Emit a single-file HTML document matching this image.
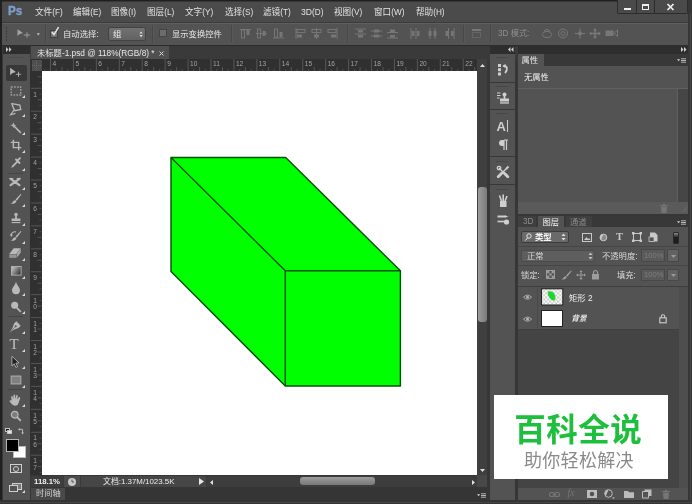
<!DOCTYPE html><html lang="zh"><head><meta charset="utf-8"><title>Photoshop</title><style>
html,body{margin:0;padding:0;background:#282828;}
#w{position:absolute;left:0;top:0;width:692px;height:504px;overflow:hidden;will-change:transform;}
body{width:692px;height:504px;overflow:hidden;position:relative;font-family:"Liberation Sans","Noto Sans CJK SC",sans-serif;font-size:8.25px;color:#e0e0e0;line-height:1;}
.a{position:absolute;}
.t{position:absolute;white-space:nowrap;line-height:10px;height:10px;}
.dim{color:#8c8c8c;}
svg{position:absolute;overflow:visible;}
</style></head><body><div id="w">
<div class="a" style="left:0px;top:0px;width:692px;height:504px;background:#363636;"></div>
<div class="a" style="left:0px;top:0px;width:692px;height:1.2px;background:#202020;"></div>
<div class="a" style="left:0px;top:0px;width:1.6px;height:504px;background:#202020;"></div>
<div class="a" style="left:2px;top:1.5px;width:686px;height:21px;background:#4b4b4b;"></div>
<div class="a" style="left:2px;top:22px;width:686px;height:1px;background:#3b3b3b;"></div>
<div class="a" style="left:2px;top:23px;width:686px;height:22px;background:#535353;border-top:1px solid #5f5f5f;box-sizing:border-box;"></div>
<div class="a" style="left:2px;top:45px;width:686px;height:14.5px;background:#3a3a3a;"></div>
<div class="a" style="left:2px;top:45px;width:686px;height:1px;background:#2c2c2c;"></div>
<div class="t " style="left:7.8px;top:2.8px;font-size:13.3px;font-weight:bold;color:#7fa0cc;line-height:15px;height:15px;transform:scaleX(0.88);transform-origin:0 0;-webkit-text-stroke:0.35px #7fa0cc;">Ps</div>
<div class="t " style="left:35px;top:6.5px;font-size:8.6px;color:#e2e2e2;">文件<span style="font-size:8.2px">(F)</span></div>
<div class="t " style="left:73px;top:6.5px;font-size:8.6px;color:#e2e2e2;">编辑<span style="font-size:8.2px">(E)</span></div>
<div class="t " style="left:111px;top:6.5px;font-size:8.6px;color:#e2e2e2;">图像<span style="font-size:8.2px">(I)</span></div>
<div class="t " style="left:147px;top:6.5px;font-size:8.6px;color:#e2e2e2;">图层<span style="font-size:8.2px">(L)</span></div>
<div class="t " style="left:185px;top:6.5px;font-size:8.6px;color:#e2e2e2;">文字<span style="font-size:8.2px">(Y)</span></div>
<div class="t " style="left:225px;top:6.5px;font-size:8.6px;color:#e2e2e2;">选择<span style="font-size:8.2px">(S)</span></div>
<div class="t " style="left:263px;top:6.5px;font-size:8.6px;color:#e2e2e2;">滤镜<span style="font-size:8.2px">(T)</span></div>
<div class="t " style="left:301px;top:6.5px;font-size:8.6px;color:#e2e2e2;">3D<span style="font-size:8.2px">(D)</span></div>
<div class="t " style="left:334px;top:6.5px;font-size:8.6px;color:#e2e2e2;">视图<span style="font-size:8.2px">(V)</span></div>
<div class="t " style="left:374px;top:6.5px;font-size:8.6px;color:#e2e2e2;">窗口<span style="font-size:8.2px">(W)</span></div>
<div class="t " style="left:416px;top:6.5px;font-size:8.6px;color:#e2e2e2;">帮助<span style="font-size:8.2px">(H)</span></div>
<div class="a" style="left:616.5px;top:0px;width:71.5px;height:13.5px;background:#4a4a4a;border:1px solid #2c2c2c;border-top:none;box-sizing:border-box;border-radius:0 0 2px 2px;"></div>
<div class="a" style="left:636px;top:0px;width:1px;height:13px;background:#2c2c2c;"></div>
<div class="a" style="left:654px;top:0px;width:1px;height:13px;background:#2c2c2c;"></div>
<div class="a" style="left:624px;top:8px;width:7px;height:2px;background:#f0f0f0;"></div>
<div class="a" style="left:642px;top:4.3px;width:7.2px;height:5.7px;background:transparent;border:1.2px solid #f0f0f0;border-top-width:2.4px;box-sizing:border-box;"></div>
<svg style="left:667px;top:4px" width="7" height="6" viewBox="0 0 7 6"><path d="M0.5 0 L6.5 6 M6.5 0 L0.5 6" stroke="#f0f0f0" stroke-width="1.7" fill="none"/></svg>
<div class="a" style="left:5.5px;top:27px;width:1.5px;height:1.5px;background:#3c3c3c;"></div>
<div class="a" style="left:5.5px;top:30px;width:1.5px;height:1.5px;background:#3c3c3c;"></div>
<div class="a" style="left:5.5px;top:33px;width:1.5px;height:1.5px;background:#3c3c3c;"></div>
<div class="a" style="left:5.5px;top:36px;width:1.5px;height:1.5px;background:#3c3c3c;"></div>
<div class="a" style="left:5.5px;top:39px;width:1.5px;height:1.5px;background:#3c3c3c;"></div>
<svg style="left:17px;top:28px" width="24" height="12" viewBox="0 0 24 12"><path d="M0.5 1.2 L0.5 8 L2.3 6.3 L6 5 Z" fill="#a4a4a4"/><path d="M6.7 7 H13.2 M10 4.2 V9.8" stroke="#a0a0a0" stroke-width="0.9"/><path d="M19.7 5.3 L22.9 5.3 L21.3 7.5 Z" fill="#c4c4c4"/></svg>
<div class="a" style="left:44.5px;top:25px;width:1px;height:17px;background:#474747;box-shadow:1px 0 0 #595959;"></div>
<div class="a" style="left:49.5px;top:29.5px;width:8px;height:8px;background:#747474;border:1px solid #404040;box-sizing:border-box;"></div>
<svg style="left:50px;top:26px" width="10" height="11" viewBox="0 0 10 11"><path d="M1.8 6 L4 8.6 L8.6 1.2" stroke="#e8e8e8" stroke-width="1.5" fill="none"/></svg>
<div class="t " style="left:63px;top:28.8px;font-size:8.4px;color:#e6e6e6;">自动选择:</div>
<div class="a" style="left:108px;top:27px;width:37.5px;height:13.5px;background:linear-gradient(180deg,#727272,#626262);border:1px solid #424242;box-sizing:border-box;border-radius:2.5px;"></div>
<div class="t " style="left:113px;top:29px;font-size:8.4px;color:#f0f0f0;">组</div>
<svg style="left:138.5px;top:30.7px" width="4.2" height="6.6" viewBox="0 0 5 8"><path d="M0.5 3 L2.5 0.5 L4.5 3 Z M0.5 5 L2.5 7.5 L4.5 5 Z" fill="#e0e0e0"/></svg>
<div class="a" style="left:152px;top:25px;width:1px;height:17px;background:#474747;box-shadow:1px 0 0 #595959;"></div>
<div class="a" style="left:159px;top:29.3px;width:8px;height:8px;background:#6c6c6c;border:1px solid #444;box-sizing:border-box;"></div>
<div class="t " style="left:172px;top:28.8px;font-size:8.3px;color:#e6e6e6;">显示变换控件</div>
<div class="a" style="left:230.5px;top:25px;width:1px;height:17px;background:#474747;box-shadow:1px 0 0 #595959;"></div>
<svg style="left:239.5px;top:28px" width="11" height="11" viewBox="0 0 11 11"><path d="M0 1.5 H11" stroke="#767676"/><rect x="1.5" y="2" width="3" height="8" fill="none" stroke="#767676"/><rect x="6.5" y="2" width="3" height="5" fill="#767676"/></svg>
<svg style="left:256.3px;top:28px" width="11" height="11" viewBox="0 0 11 11"><path d="M0 5.5 H11" stroke="#767676"/><rect x="1.5" y="1" width="3" height="9" fill="none" stroke="#767676"/><rect x="6.5" y="3" width="3" height="5" fill="#767676"/></svg>
<svg style="left:273px;top:28px" width="11" height="11" viewBox="0 0 11 11"><path d="M0 10 H11" stroke="#767676"/><rect x="1.5" y="1" width="3" height="8" fill="none" stroke="#767676"/><rect x="6.5" y="4" width="3" height="5" fill="#767676"/></svg>
<svg style="left:294.5px;top:28px" width="11" height="11" viewBox="0 0 11 11"><path d="M1 0 V11" stroke="#767676"/><rect x="2" y="1.5" width="8" height="3" fill="none" stroke="#767676"/><rect x="2" y="6.5" width="5" height="3" fill="#767676"/></svg>
<svg style="left:310.6px;top:28px" width="11" height="11" viewBox="0 0 11 11"><path d="M5.5 0 V11" stroke="#767676"/><rect x="1" y="1.5" width="9" height="3" fill="none" stroke="#767676"/><rect x="3" y="6.5" width="5" height="3" fill="#767676"/></svg>
<svg style="left:327.4px;top:28px" width="11" height="11" viewBox="0 0 11 11"><path d="M10 0 V11" stroke="#767676"/><rect x="1" y="1.5" width="8" height="3" fill="none" stroke="#767676"/><rect x="4" y="6.5" width="5" height="3" fill="#767676"/></svg>
<svg style="left:355.4px;top:28px" width="11" height="11" viewBox="0 0 11 11"><path d="M0 1 H11 M0 6 H11" stroke="#767676"/><rect x="3" y="2" width="5" height="2.5" fill="#767676"/><rect x="3" y="7" width="5" height="2.5" fill="#767676"/></svg>
<svg style="left:371.3px;top:28px" width="11" height="11" viewBox="0 0 11 11"><path d="M0 3 H11 M0 8 H11" stroke="#767676"/><rect x="3" y="1.5" width="5" height="3" fill="#767676"/><rect x="3" y="6.5" width="5" height="3" fill="#767676"/></svg>
<svg style="left:387.2px;top:28px" width="11" height="11" viewBox="0 0 11 11"><path d="M0 4.5 H11 M0 10 H11" stroke="#767676"/><rect x="3" y="1.5" width="5" height="2.5" fill="#767676"/><rect x="3" y="7" width="5" height="2.5" fill="#767676"/></svg>
<svg style="left:409.8px;top:28px" width="11" height="11" viewBox="0 0 11 11"><path d="M1 0 V11 M6 0 V11" stroke="#767676"/><rect x="2" y="3" width="2.5" height="5" fill="#767676"/><rect x="7" y="3" width="2.5" height="5" fill="#767676"/></svg>
<svg style="left:426.6px;top:28px" width="11" height="11" viewBox="0 0 11 11"><path d="M3 0 V11 M8 0 V11" stroke="#767676"/><rect x="1.5" y="3" width="3" height="5" fill="#767676"/><rect x="6.5" y="3" width="3" height="5" fill="#767676"/></svg>
<svg style="left:443.5px;top:28px" width="11" height="11" viewBox="0 0 11 11"><path d="M4.5 0 V11 M10 0 V11" stroke="#767676"/><rect x="1.5" y="3" width="2.5" height="5" fill="#767676"/><rect x="7" y="3" width="2.5" height="5" fill="#767676"/></svg>
<svg style="left:471px;top:28px" width="11" height="11" viewBox="0 0 11 11"><rect x="1" y="1" width="9" height="2" fill="#767676"/><rect x="1.5" y="4.5" width="8" height="5" fill="none" stroke="#767676" stroke-dasharray="1 1"/></svg>
<div class="a" style="left:347px;top:25px;width:1px;height:17px;background:#474747;box-shadow:1px 0 0 #595959;"></div>
<div class="a" style="left:463px;top:25px;width:1px;height:17px;background:#474747;box-shadow:1px 0 0 #595959;"></div>
<div class="a" style="left:489.5px;top:25px;width:1px;height:17px;background:#474747;box-shadow:1px 0 0 #595959;"></div>
<div class="t " style="left:498px;top:28.8px;font-size:8.2px;color:#8e8e8e;">3D 模式:</div>
<svg style="left:541px;top:28px" width="12" height="11" viewBox="0 0 12 11"><ellipse cx="6" cy="6.5" rx="4.5" ry="3" fill="none" stroke="#787878"/><path d="M3 3 A4 4 0 0 1 9 3" fill="none" stroke="#787878"/></svg>
<svg style="left:557px;top:28px" width="12" height="11" viewBox="0 0 12 11"><circle cx="6" cy="5.5" r="4.5" fill="none" stroke="#787878"/><circle cx="6" cy="5.5" r="2" fill="none" stroke="#787878"/></svg>
<svg style="left:574px;top:28px" width="12" height="11" viewBox="0 0 12 11"><path d="M6 0.5 V10.5 M1 5.5 H11" stroke="#787878"/><circle cx="6" cy="5.5" r="2" fill="#787878"/></svg>
<svg style="left:589px;top:28px" width="12" height="11" viewBox="0 0 12 11"><path d="M6 1 V10 M1 5.5 H11" stroke="#787878" stroke-width="1.5"/><path d="M6 0 L8 2.5 H4 Z M6 11 L8 8.5 H4 Z M0 5.5 L2.5 3.5 V7.5 Z M12 5.5 L9.5 3.5 V7.5 Z" fill="#787878"/></svg>
<svg style="left:605px;top:29px" width="13" height="9" viewBox="0 0 13 9"><rect x="0.5" y="1.5" width="8" height="5.5" fill="#787878"/><path d="M9 4.2 L12.5 1 V7.5 Z" fill="none" stroke="#787878"/></svg>
<div class="a" style="left:31px;top:46px;width:138px;height:13px;background:#505050;border-radius:1px 1px 0 0;"></div>
<div class="t " style="left:37px;top:48px;font-size:8.3px;color:#e8e8e8;">未标题-1.psd @ 118%(RGB/8) *</div>
<svg style="left:158.5px;top:50.5px" width="5" height="5" viewBox="0 0 5 5"><path d="M0.5 0.5 L4.5 4.5 M4.5 0.5 L0.5 4.5" stroke="#d8d8d8" stroke-width="1"/></svg>
<div class="a" style="left:3px;top:45px;width:26.5px;height:8.5px;background:#2e2e2e;"></div>
<svg style="left:6px;top:47px" width="6" height="5" viewBox="0 0 6 5"><path d="M0 0 L2.5 2.5 L0 5 Z M3 0 L5.5 2.5 L3 5 Z" fill="#d0d0d0"/></svg>
<div class="a" style="left:3px;top:53.5px;width:26.5px;height:446px;background:#535353;"></div>
<div class="a" style="left:9px;top:57px;width:14px;height:1.2px;background:#494949;"></div>
<div class="a" style="left:6px;top:64.5px;width:20.5px;height:16px;background:#383838;border-radius:2px;"></div>
<svg style="left:8.2px;top:66px;transform:scale(0.88);opacity:0.92" width="14" height="14" viewBox="0 0 14 14"><path d="M1.5 1 L1.5 9.5 L3.8 7.3 L8 6 Z" fill="#c2c2c2"/><path d="M8 8.5 H14 M11 5.5 V11.5" stroke="#c2c2c2" stroke-width="1"/></svg>
<svg style="left:8.7px;top:83.5px;transform:scale(0.88);opacity:0.92" width="14" height="14" viewBox="0 0 14 14"><rect x="1.5" y="2.5" width="11" height="9" fill="none" stroke="#c2c2c2" stroke-width="1.2" stroke-dasharray="2 1.3"/></svg>
<svg style="left:22px;top:95px" width="3" height="3" viewBox="0 0 3 3"><path d="M3 0 V3 H0 Z" fill="#d8d8d8"/></svg>
<svg style="left:8px;top:102px;transform:scale(0.88);opacity:0.92" width="14" height="14" viewBox="0 0 14 14"><path d="M3.5 1 L12.5 2.5 L13.5 7.5 L7 9 L5 5.5 Z" fill="none" stroke="#c2c2c2" stroke-width="1.5"/><path d="M6 8 L2 13.5 L7.5 12" fill="none" stroke="#c2c2c2" stroke-width="1.3"/></svg>
<svg style="left:22px;top:113.5px" width="3" height="3" viewBox="0 0 3 3"><path d="M3 0 V3 H0 Z" fill="#d8d8d8"/></svg>
<svg style="left:8.7px;top:120.5px;transform:scale(0.88);opacity:0.92" width="14" height="14" viewBox="0 0 14 14"><path d="M5 5 L12.5 12.5" stroke="#c2c2c2" stroke-width="1.8"/><path d="M4 0.5 L4.8 3 L7.5 3.8 L4.8 4.8 L4 7.5 L3.2 4.8 L0.5 3.8 L3.2 3 Z" fill="#c2c2c2"/></svg>
<svg style="left:22px;top:132px" width="3" height="3" viewBox="0 0 3 3"><path d="M3 0 V3 H0 Z" fill="#d8d8d8"/></svg>
<svg style="left:8.7px;top:138px;transform:scale(0.88);opacity:0.92" width="14" height="14" viewBox="0 0 14 14"><path d="M4 1 V10 H13 M1 4 H10 V13" fill="none" stroke="#c2c2c2" stroke-width="1.6"/></svg>
<svg style="left:22px;top:149.5px" width="3" height="3" viewBox="0 0 3 3"><path d="M3 0 V3 H0 Z" fill="#d8d8d8"/></svg>
<svg style="left:8.7px;top:156px;transform:scale(0.88);opacity:0.92" width="14" height="14" viewBox="0 0 14 14"><path d="M1.5 12.5 L2.5 10 L8 4.5 L9.5 6 L4 11.5 Z" fill="#c2c2c2"/><path d="M7 3 L11 7 M8.5 4.5 L11.5 1.5" stroke="#c2c2c2" stroke-width="2.2" stroke-linecap="round"/></svg>
<svg style="left:22px;top:167.5px" width="3" height="3" viewBox="0 0 3 3"><path d="M3 0 V3 H0 Z" fill="#d8d8d8"/></svg>
<div class="a" style="left:8px;top:172.5px;width:15px;height:1px;background:#454545;"></div>
<svg style="left:8.2px;top:175px;transform:scale(0.88);opacity:0.92" width="14" height="14" viewBox="0 0 14 14"><path d="M2 3.5 L12 10.5 M2 10.5 L12 3.5" stroke="#c2c2c2" stroke-width="2.6" stroke-linecap="round"/><path d="M0.5 3 H5 M9 3 H13.5" stroke="#c2c2c2" stroke-width="1.3"/></svg>
<svg style="left:22px;top:186.5px" width="3" height="3" viewBox="0 0 3 3"><path d="M3 0 V3 H0 Z" fill="#d8d8d8"/></svg>
<svg style="left:8.7px;top:192.3px;transform:scale(0.88);opacity:0.92" width="14" height="14" viewBox="0 0 14 14"><path d="M12.5 1 L6.5 7.5 L8 9 L13 2 Z" fill="#c2c2c2"/><path d="M6 8 L7.5 9.5 C6.5 12.5 3.5 12.5 1 12.5 C3 11.5 3.5 9 6 8 Z" fill="#c2c2c2"/></svg>
<svg style="left:22px;top:203.8px" width="3" height="3" viewBox="0 0 3 3"><path d="M3 0 V3 H0 Z" fill="#d8d8d8"/></svg>
<svg style="left:8.7px;top:211px;transform:scale(0.88);opacity:0.92" width="14" height="14" viewBox="0 0 14 14"><circle cx="7" cy="3" r="2" fill="#c2c2c2"/><path d="M6 4 H8 V7.5 H12 V10.5 H2 V7.5 H6 Z" fill="#c2c2c2"/><rect x="2" y="11.5" width="10" height="1.3" fill="#c2c2c2"/></svg>
<svg style="left:22px;top:222.5px" width="3" height="3" viewBox="0 0 3 3"><path d="M3 0 V3 H0 Z" fill="#d8d8d8"/></svg>
<svg style="left:8.7px;top:229px;transform:scale(0.88);opacity:0.92" width="14" height="14" viewBox="0 0 14 14"><path d="M12.5 1 L6.5 7.5 L8 9 L13 2 Z" fill="#c2c2c2"/><path d="M6 8 L7.5 9.5 C6.5 12.5 3.5 12.5 1 12.5 C3 11.5 3.5 9 6 8 Z" fill="#c2c2c2"/><path d="M1.5 6 A4 4 0 0 1 7 2.5" fill="none" stroke="#c2c2c2" stroke-width="1.2"/><path d="M0 5 L3.5 5.5 L1.5 8 Z" fill="#c2c2c2"/></svg>
<svg style="left:22px;top:240.5px" width="3" height="3" viewBox="0 0 3 3"><path d="M3 0 V3 H0 Z" fill="#d8d8d8"/></svg>
<svg style="left:8.4px;top:246px;transform:scale(0.88);opacity:0.92" width="14" height="14" viewBox="0 0 14 14"><path d="M5.5 1.5 H13.5 L8.5 8 H0.5 Z" fill="#c2c2c2"/><path d="M0.5 8.6 H8.5 V12.5 H0.5 Z" fill="#9a9a9a"/><path d="M9 8 L13.5 2 V6.5 L9 12.5 Z" fill="#b0b0b0"/></svg>
<svg style="left:22px;top:257.5px" width="3" height="3" viewBox="0 0 3 3"><path d="M3 0 V3 H0 Z" fill="#d8d8d8"/></svg>
<svg style="left:9.5px;top:264px" width="14" height="14" viewBox="0 0 14 14"><defs><linearGradient id="gr" x1="0" x2="1" y1="0" y2="0.6"><stop offset="0" stop-color="#d0d0d0"/><stop offset="1" stop-color="#3c3c3c"/></linearGradient></defs><rect x="1.5" y="2.5" width="9.6" height="8.6" fill="url(#gr)" stroke="#b4b4b4" stroke-width="0.9"/></svg>
<svg style="left:22px;top:275.5px" width="3" height="3" viewBox="0 0 3 3"><path d="M3 0 V3 H0 Z" fill="#d8d8d8"/></svg>
<svg style="left:8.7px;top:281px;transform:scale(0.88);opacity:0.92" width="14" height="14" viewBox="0 0 14 14"><path d="M7 0 C8 4 11.5 6.5 11.5 9.5 A4.5 4.5 0 0 1 2.5 9.5 C2.5 6.5 6 4 7 0 Z" fill="#c2c2c2"/></svg>
<svg style="left:22px;top:292.5px" width="3" height="3" viewBox="0 0 3 3"><path d="M3 0 V3 H0 Z" fill="#d8d8d8"/></svg>
<svg style="left:8.7px;top:299.5px;transform:scale(0.88);opacity:0.92" width="14" height="14" viewBox="0 0 14 14"><circle cx="5.5" cy="5" r="4" fill="#c2c2c2"/><path d="M8 8 L12.5 12.5" stroke="#c2c2c2" stroke-width="2"/></svg>
<svg style="left:22px;top:311px" width="3" height="3" viewBox="0 0 3 3"><path d="M3 0 V3 H0 Z" fill="#d8d8d8"/></svg>
<div class="a" style="left:8px;top:315.5px;width:15px;height:1px;background:#454545;"></div>
<svg style="left:8.4px;top:319.5px;transform:scale(0.88);opacity:0.92" width="14" height="14" viewBox="0 0 14 14"><path d="M8.5 0.5 L13.5 5.5 L11 8 L5.5 10 L0.5 13.5 L4 8.5 L6 3 Z" fill="#c2c2c2"/><circle cx="7.8" cy="6.2" r="1.1" fill="#535353"/><path d="M0.5 13.5 L7 7" stroke="#535353" stroke-width="0.7"/></svg>
<svg style="left:22px;top:331px" width="3" height="3" viewBox="0 0 3 3"><path d="M3 0 V3 H0 Z" fill="#d8d8d8"/></svg>
<div class="t" style="left:9.5px;top:337px;font-family:'Liberation Serif',serif;font-size:15px;line-height:15px;height:15px;color:#c2c2c2;">T</div>
<svg style="left:22px;top:349px" width="3" height="3" viewBox="0 0 3 3"><path d="M3 0 V3 H0 Z" fill="#d8d8d8"/></svg>
<svg style="left:8.3px;top:354.5px;transform:scale(0.88);opacity:0.92" width="14" height="14" viewBox="0 0 14 14"><path d="M3.5 0.5 L3.5 11.5 L6 9 L8 13.2 L10 12.3 L8 8.3 L11.5 8 Z" fill="#1c1c1c" stroke="#c2c2c2" stroke-width="1"/></svg>
<svg style="left:22px;top:366px" width="3" height="3" viewBox="0 0 3 3"><path d="M3 0 V3 H0 Z" fill="#d8d8d8"/></svg>
<svg style="left:8.7px;top:373px;transform:scale(0.88);opacity:0.92" width="14" height="14" viewBox="0 0 14 14"><rect x="1.5" y="2.5" width="11" height="9" fill="#858585" stroke="#b8b8b8" stroke-width="1.1"/></svg>
<svg style="left:22px;top:384.5px" width="3" height="3" viewBox="0 0 3 3"><path d="M3 0 V3 H0 Z" fill="#d8d8d8"/></svg>
<div class="a" style="left:8px;top:389px;width:15px;height:1px;background:#454545;"></div>
<svg style="left:8.2px;top:392.5px;transform:scale(0.88);opacity:0.92" width="14" height="14" viewBox="0 0 14 14"><path d="M3.2 7.5 L2.6 3 Q3.5 2 4.3 3 L5 6 L5.3 1.3 Q6.3 0.3 7.1 1.3 L7.3 6 L8.4 1.6 Q9.5 0.9 10.1 2 L9.6 6.5 L11.6 3.6 Q12.8 3.4 13 4.6 L11.3 9.5 Q10.5 13.5 6.8 13.5 Q4 13.5 0.6 8.2 Q1.6 6.6 3.2 7.5 Z" fill="#c2c2c2"/></svg>
<svg style="left:22px;top:404px" width="3" height="3" viewBox="0 0 3 3"><path d="M3 0 V3 H0 Z" fill="#d8d8d8"/></svg>
<svg style="left:8.7px;top:409.3px;transform:scale(0.88);opacity:0.92" width="14" height="14" viewBox="0 0 14 14"><circle cx="5.5" cy="5.5" r="3.8" fill="#808080" stroke="#c2c2c2" stroke-width="1.4"/><path d="M8.2 8.2 L12.5 12.5" stroke="#c2c2c2" stroke-width="2"/></svg>
<div class="a" style="left:5.3px;top:427.7px;width:4.6px;height:4.6px;background:#111;border:0.8px solid #c4c4c4;box-sizing:border-box;"></div>
<div class="a" style="left:7.4px;top:429.6px;width:4.6px;height:4.6px;background:#e4e4e4;border:0.8px solid #c4c4c4;box-sizing:border-box;"></div>
<svg style="left:18px;top:427.7px" width="6.4" height="6.4" viewBox="0 0 7 7"><path d="M1.5 1.5 H5 V5.5" fill="none" stroke="#c2c2c2" stroke-width="1"/><path d="M0 1.5 L2 0 V3 Z M5 7 L3.5 5 H6.5 Z" fill="#c2c2c2"/></svg>
<div class="a" style="left:13px;top:445.5px;width:12.5px;height:12px;background:#ffffff;border:0.5px solid #bbb;box-sizing:border-box;"></div>
<div class="a" style="left:6px;top:439px;width:12.5px;height:12.5px;background:#000000;border:1px solid #b5b5b5;box-sizing:border-box;"></div>
<div class="a" style="left:9.5px;top:464px;width:12px;height:9px;background:transparent;border:1px solid #cfcfcf;box-sizing:border-box;"></div>
<div class="a" style="left:12.5px;top:465.5px;width:6px;height:6px;background:transparent;border:1px solid #cfcfcf;box-sizing:border-box;border-radius:50%;"></div>
<div class="a" style="left:12px;top:482.5px;width:9.5px;height:7px;background:#777;border:1px solid #cfcfcf;box-sizing:border-box;"></div>
<div class="a" style="left:9px;top:485px;width:9px;height:6.5px;background:#535353;border:1px solid #cfcfcf;box-sizing:border-box;"></div>
<svg style="left:22px;top:490px" width="3" height="3" viewBox="0 0 3 3"><path d="M3 0 V3 H0 Z" fill="#d8d8d8"/></svg>
<div class="a" style="left:31px;top:59px;width:456px;height:428.5px;background:#3f3f3f;"></div>
<div class="a" style="left:31px;top:59px;width:446px;height:12px;background:#303030;"></div>
<div class="a" style="left:29.5px;top:71px;width:12px;height:404px;background:#303030;"></div>
<div class="a" style="left:31.5px;top:60px;width:10px;height:11px;background:#4f4f4f;"></div>
<svg style="left:31px;top:60px" width="11" height="11" viewBox="0 0 11 11"><path d="M5.5 1 V10 M1 5.5 H10" stroke="#6a6a6a" stroke-width="1" stroke-dasharray="1 1"/></svg>
<svg style="left:0;top:0" width="692" height="504" viewBox="0 0 692 504"><path d="M44.77 69 V71" stroke="#565656" stroke-width="0.8"/><path d="M50.50 59 V71" stroke="#565656" stroke-width="1"/><path d="M56.23 69 V71" stroke="#565656" stroke-width="0.8"/><path d="M61.97 67 V71" stroke="#565656" stroke-width="1"/><path d="M67.70 69 V71" stroke="#565656" stroke-width="0.8"/><path d="M73.43 59 V71" stroke="#565656" stroke-width="1"/><path d="M79.16 69 V71" stroke="#565656" stroke-width="0.8"/><path d="M84.89 67 V71" stroke="#565656" stroke-width="1"/><path d="M90.63 69 V71" stroke="#565656" stroke-width="0.8"/><path d="M96.36 59 V71" stroke="#565656" stroke-width="1"/><path d="M102.09 69 V71" stroke="#565656" stroke-width="0.8"/><path d="M107.82 67 V71" stroke="#565656" stroke-width="1"/><path d="M113.56 69 V71" stroke="#565656" stroke-width="0.8"/><path d="M119.29 59 V71" stroke="#565656" stroke-width="1"/><path d="M125.02 69 V71" stroke="#565656" stroke-width="0.8"/><path d="M130.75 67 V71" stroke="#565656" stroke-width="1"/><path d="M136.49 69 V71" stroke="#565656" stroke-width="0.8"/><path d="M142.22 59 V71" stroke="#565656" stroke-width="1"/><path d="M147.95 69 V71" stroke="#565656" stroke-width="0.8"/><path d="M153.69 67 V71" stroke="#565656" stroke-width="1"/><path d="M159.42 69 V71" stroke="#565656" stroke-width="0.8"/><path d="M165.15 59 V71" stroke="#565656" stroke-width="1"/><path d="M170.88 69 V71" stroke="#565656" stroke-width="0.8"/><path d="M176.62 67 V71" stroke="#565656" stroke-width="1"/><path d="M182.35 69 V71" stroke="#565656" stroke-width="0.8"/><path d="M188.08 59 V71" stroke="#565656" stroke-width="1"/><path d="M193.81 69 V71" stroke="#565656" stroke-width="0.8"/><path d="M199.54 67 V71" stroke="#565656" stroke-width="1"/><path d="M205.28 69 V71" stroke="#565656" stroke-width="0.8"/><path d="M211.01 59 V71" stroke="#565656" stroke-width="1"/><path d="M216.74 69 V71" stroke="#565656" stroke-width="0.8"/><path d="M222.47 67 V71" stroke="#565656" stroke-width="1"/><path d="M228.21 69 V71" stroke="#565656" stroke-width="0.8"/><path d="M233.94 59 V71" stroke="#565656" stroke-width="1"/><path d="M239.67 69 V71" stroke="#565656" stroke-width="0.8"/><path d="M245.41 67 V71" stroke="#565656" stroke-width="1"/><path d="M251.14 69 V71" stroke="#565656" stroke-width="0.8"/><path d="M256.87 59 V71" stroke="#565656" stroke-width="1"/><path d="M262.60 69 V71" stroke="#565656" stroke-width="0.8"/><path d="M268.34 67 V71" stroke="#565656" stroke-width="1"/><path d="M274.07 69 V71" stroke="#565656" stroke-width="0.8"/><path d="M279.80 59 V71" stroke="#565656" stroke-width="1"/><path d="M285.53 69 V71" stroke="#565656" stroke-width="0.8"/><path d="M291.26 67 V71" stroke="#565656" stroke-width="1"/><path d="M297.00 69 V71" stroke="#565656" stroke-width="0.8"/><path d="M302.73 59 V71" stroke="#565656" stroke-width="1"/><path d="M308.46 69 V71" stroke="#565656" stroke-width="0.8"/><path d="M314.20 67 V71" stroke="#565656" stroke-width="1"/><path d="M319.93 69 V71" stroke="#565656" stroke-width="0.8"/><path d="M325.66 59 V71" stroke="#565656" stroke-width="1"/><path d="M331.39 69 V71" stroke="#565656" stroke-width="0.8"/><path d="M337.12 67 V71" stroke="#565656" stroke-width="1"/><path d="M342.86 69 V71" stroke="#565656" stroke-width="0.8"/><path d="M348.59 59 V71" stroke="#565656" stroke-width="1"/><path d="M354.32 69 V71" stroke="#565656" stroke-width="0.8"/><path d="M360.05 67 V71" stroke="#565656" stroke-width="1"/><path d="M365.79 69 V71" stroke="#565656" stroke-width="0.8"/><path d="M371.52 59 V71" stroke="#565656" stroke-width="1"/><path d="M377.25 69 V71" stroke="#565656" stroke-width="0.8"/><path d="M382.99 67 V71" stroke="#565656" stroke-width="1"/><path d="M388.72 69 V71" stroke="#565656" stroke-width="0.8"/><path d="M394.45 59 V71" stroke="#565656" stroke-width="1"/><path d="M400.18 69 V71" stroke="#565656" stroke-width="0.8"/><path d="M405.91 67 V71" stroke="#565656" stroke-width="1"/><path d="M411.65 69 V71" stroke="#565656" stroke-width="0.8"/><path d="M417.38 59 V71" stroke="#565656" stroke-width="1"/><path d="M423.11 69 V71" stroke="#565656" stroke-width="0.8"/><path d="M428.85 67 V71" stroke="#565656" stroke-width="1"/><path d="M434.58 69 V71" stroke="#565656" stroke-width="0.8"/><path d="M440.31 59 V71" stroke="#565656" stroke-width="1"/><path d="M446.04 69 V71" stroke="#565656" stroke-width="0.8"/><path d="M451.77 67 V71" stroke="#565656" stroke-width="1"/><path d="M457.51 69 V71" stroke="#565656" stroke-width="0.8"/><path d="M463.24 59 V71" stroke="#565656" stroke-width="1"/><path d="M468.97 69 V71" stroke="#565656" stroke-width="0.8"/><path d="M474.70 67 V71" stroke="#565656" stroke-width="1"/><path d="M37.5 76.84 H41.5" stroke="#565656" stroke-width="1"/><path d="M39.5 82.57 H41.5" stroke="#565656" stroke-width="0.8"/><path d="M31 88.30 H41.5" stroke="#565656" stroke-width="1"/><path d="M39.5 94.03 H41.5" stroke="#565656" stroke-width="0.8"/><path d="M37.5 99.77 H41.5" stroke="#565656" stroke-width="1"/><path d="M39.5 105.50 H41.5" stroke="#565656" stroke-width="0.8"/><path d="M31 111.23 H41.5" stroke="#565656" stroke-width="1"/><path d="M39.5 116.96 H41.5" stroke="#565656" stroke-width="0.8"/><path d="M37.5 122.70 H41.5" stroke="#565656" stroke-width="1"/><path d="M39.5 128.43 H41.5" stroke="#565656" stroke-width="0.8"/><path d="M31 134.16 H41.5" stroke="#565656" stroke-width="1"/><path d="M39.5 139.89 H41.5" stroke="#565656" stroke-width="0.8"/><path d="M37.5 145.62 H41.5" stroke="#565656" stroke-width="1"/><path d="M39.5 151.36 H41.5" stroke="#565656" stroke-width="0.8"/><path d="M31 157.09 H41.5" stroke="#565656" stroke-width="1"/><path d="M39.5 162.82 H41.5" stroke="#565656" stroke-width="0.8"/><path d="M37.5 168.56 H41.5" stroke="#565656" stroke-width="1"/><path d="M39.5 174.29 H41.5" stroke="#565656" stroke-width="0.8"/><path d="M31 180.02 H41.5" stroke="#565656" stroke-width="1"/><path d="M39.5 185.75 H41.5" stroke="#565656" stroke-width="0.8"/><path d="M37.5 191.49 H41.5" stroke="#565656" stroke-width="1"/><path d="M39.5 197.22 H41.5" stroke="#565656" stroke-width="0.8"/><path d="M31 202.95 H41.5" stroke="#565656" stroke-width="1"/><path d="M39.5 208.68 H41.5" stroke="#565656" stroke-width="0.8"/><path d="M37.5 214.41 H41.5" stroke="#565656" stroke-width="1"/><path d="M39.5 220.15 H41.5" stroke="#565656" stroke-width="0.8"/><path d="M31 225.88 H41.5" stroke="#565656" stroke-width="1"/><path d="M39.5 231.61 H41.5" stroke="#565656" stroke-width="0.8"/><path d="M37.5 237.34 H41.5" stroke="#565656" stroke-width="1"/><path d="M39.5 243.08 H41.5" stroke="#565656" stroke-width="0.8"/><path d="M31 248.81 H41.5" stroke="#565656" stroke-width="1"/><path d="M39.5 254.54 H41.5" stroke="#565656" stroke-width="0.8"/><path d="M37.5 260.27 H41.5" stroke="#565656" stroke-width="1"/><path d="M39.5 266.01 H41.5" stroke="#565656" stroke-width="0.8"/><path d="M31 271.74 H41.5" stroke="#565656" stroke-width="1"/><path d="M39.5 277.47 H41.5" stroke="#565656" stroke-width="0.8"/><path d="M37.5 283.21 H41.5" stroke="#565656" stroke-width="1"/><path d="M39.5 288.94 H41.5" stroke="#565656" stroke-width="0.8"/><path d="M31 294.67 H41.5" stroke="#565656" stroke-width="1"/><path d="M39.5 300.40 H41.5" stroke="#565656" stroke-width="0.8"/><path d="M37.5 306.13 H41.5" stroke="#565656" stroke-width="1"/><path d="M39.5 311.87 H41.5" stroke="#565656" stroke-width="0.8"/><path d="M31 317.60 H41.5" stroke="#565656" stroke-width="1"/><path d="M39.5 323.33 H41.5" stroke="#565656" stroke-width="0.8"/><path d="M37.5 329.06 H41.5" stroke="#565656" stroke-width="1"/><path d="M39.5 334.80 H41.5" stroke="#565656" stroke-width="0.8"/><path d="M31 340.53 H41.5" stroke="#565656" stroke-width="1"/><path d="M39.5 346.26 H41.5" stroke="#565656" stroke-width="0.8"/><path d="M37.5 352.00 H41.5" stroke="#565656" stroke-width="1"/><path d="M39.5 357.73 H41.5" stroke="#565656" stroke-width="0.8"/><path d="M31 363.46 H41.5" stroke="#565656" stroke-width="1"/><path d="M39.5 369.19 H41.5" stroke="#565656" stroke-width="0.8"/><path d="M37.5 374.93 H41.5" stroke="#565656" stroke-width="1"/><path d="M39.5 380.66 H41.5" stroke="#565656" stroke-width="0.8"/><path d="M31 386.39 H41.5" stroke="#565656" stroke-width="1"/><path d="M39.5 392.12 H41.5" stroke="#565656" stroke-width="0.8"/><path d="M37.5 397.86 H41.5" stroke="#565656" stroke-width="1"/><path d="M39.5 403.59 H41.5" stroke="#565656" stroke-width="0.8"/><path d="M31 409.32 H41.5" stroke="#565656" stroke-width="1"/><path d="M39.5 415.05 H41.5" stroke="#565656" stroke-width="0.8"/><path d="M37.5 420.79 H41.5" stroke="#565656" stroke-width="1"/><path d="M39.5 426.52 H41.5" stroke="#565656" stroke-width="0.8"/><path d="M31 432.25 H41.5" stroke="#565656" stroke-width="1"/><path d="M39.5 437.98 H41.5" stroke="#565656" stroke-width="0.8"/><path d="M37.5 443.71 H41.5" stroke="#565656" stroke-width="1"/><path d="M39.5 449.45 H41.5" stroke="#565656" stroke-width="0.8"/><path d="M31 455.18 H41.5" stroke="#565656" stroke-width="1"/><path d="M39.5 460.91 H41.5" stroke="#565656" stroke-width="0.8"/><path d="M37.5 466.64 H41.5" stroke="#565656" stroke-width="1"/><path d="M39.5 472.38 H41.5" stroke="#565656" stroke-width="0.8"/></svg>
<div class="t " style="left:52.5px;top:59px;font-size:6.6px;color:#a2a2a2;line-height:9px;height:9px;">4</div>
<div class="t " style="left:75.43px;top:59px;font-size:6.6px;color:#a2a2a2;line-height:9px;height:9px;">5</div>
<div class="t " style="left:98.36px;top:59px;font-size:6.6px;color:#a2a2a2;line-height:9px;height:9px;">6</div>
<div class="t " style="left:121.29px;top:59px;font-size:6.6px;color:#a2a2a2;line-height:9px;height:9px;">7</div>
<div class="t " style="left:144.22px;top:59px;font-size:6.6px;color:#a2a2a2;line-height:9px;height:9px;">8</div>
<div class="t " style="left:167.15px;top:59px;font-size:6.6px;color:#a2a2a2;line-height:9px;height:9px;">9</div>
<div class="t " style="left:190.08px;top:59px;font-size:6.6px;color:#a2a2a2;line-height:9px;height:9px;">10</div>
<div class="t " style="left:213.01px;top:59px;font-size:6.6px;color:#a2a2a2;line-height:9px;height:9px;">11</div>
<div class="t " style="left:235.94px;top:59px;font-size:6.6px;color:#a2a2a2;line-height:9px;height:9px;">12</div>
<div class="t " style="left:258.87px;top:59px;font-size:6.6px;color:#a2a2a2;line-height:9px;height:9px;">13</div>
<div class="t " style="left:281.8px;top:59px;font-size:6.6px;color:#a2a2a2;line-height:9px;height:9px;">14</div>
<div class="t " style="left:304.73px;top:59px;font-size:6.6px;color:#a2a2a2;line-height:9px;height:9px;">15</div>
<div class="t " style="left:327.66px;top:59px;font-size:6.6px;color:#a2a2a2;line-height:9px;height:9px;">16</div>
<div class="t " style="left:350.59px;top:59px;font-size:6.6px;color:#a2a2a2;line-height:9px;height:9px;">17</div>
<div class="t " style="left:373.52px;top:59px;font-size:6.6px;color:#a2a2a2;line-height:9px;height:9px;">18</div>
<div class="t " style="left:396.45px;top:59px;font-size:6.6px;color:#a2a2a2;line-height:9px;height:9px;">19</div>
<div class="t " style="left:419.38px;top:59px;font-size:6.6px;color:#a2a2a2;line-height:9px;height:9px;">20</div>
<div class="t " style="left:442.31px;top:59px;font-size:6.6px;color:#a2a2a2;line-height:9px;height:9px;">21</div>
<div class="t " style="left:465.24px;top:59px;font-size:6.6px;color:#a2a2a2;line-height:9px;height:9px;">22</div>
<div class="t " style="left:32px;top:90.5px;font-size:6.6px;color:#a2a2a2;line-height:8px;height:8px;width:6px;text-align:center;">1</div>
<div class="t " style="left:32px;top:113.43px;font-size:6.6px;color:#a2a2a2;line-height:8px;height:8px;width:6px;text-align:center;">2</div>
<div class="t " style="left:32px;top:136.36px;font-size:6.6px;color:#a2a2a2;line-height:8px;height:8px;width:6px;text-align:center;">3</div>
<div class="t " style="left:32px;top:159.29px;font-size:6.6px;color:#a2a2a2;line-height:8px;height:8px;width:6px;text-align:center;">4</div>
<div class="t " style="left:32px;top:182.22px;font-size:6.6px;color:#a2a2a2;line-height:8px;height:8px;width:6px;text-align:center;">5</div>
<div class="t " style="left:32px;top:205.15px;font-size:6.6px;color:#a2a2a2;line-height:8px;height:8px;width:6px;text-align:center;">6</div>
<div class="t " style="left:32px;top:228.08px;font-size:6.6px;color:#a2a2a2;line-height:8px;height:8px;width:6px;text-align:center;">7</div>
<div class="t " style="left:32px;top:251.01px;font-size:6.6px;color:#a2a2a2;line-height:8px;height:8px;width:6px;text-align:center;">8</div>
<div class="t " style="left:32px;top:273.94px;font-size:6.6px;color:#a2a2a2;line-height:8px;height:8px;width:6px;text-align:center;">9</div>
<div class="t " style="left:32px;top:296.87px;font-size:6.6px;color:#a2a2a2;line-height:8px;height:8px;width:6px;text-align:center;">1</div>
<div class="t " style="left:32px;top:303.47px;font-size:6.6px;color:#a2a2a2;line-height:8px;height:8px;width:6px;text-align:center;">0</div>
<div class="t " style="left:32px;top:319.8px;font-size:6.6px;color:#a2a2a2;line-height:8px;height:8px;width:6px;text-align:center;">1</div>
<div class="t " style="left:32px;top:326.4px;font-size:6.6px;color:#a2a2a2;line-height:8px;height:8px;width:6px;text-align:center;">1</div>
<div class="t " style="left:32px;top:342.73px;font-size:6.6px;color:#a2a2a2;line-height:8px;height:8px;width:6px;text-align:center;">1</div>
<div class="t " style="left:32px;top:349.33px;font-size:6.6px;color:#a2a2a2;line-height:8px;height:8px;width:6px;text-align:center;">2</div>
<div class="t " style="left:32px;top:365.66px;font-size:6.6px;color:#a2a2a2;line-height:8px;height:8px;width:6px;text-align:center;">1</div>
<div class="t " style="left:32px;top:372.26px;font-size:6.6px;color:#a2a2a2;line-height:8px;height:8px;width:6px;text-align:center;">3</div>
<div class="t " style="left:32px;top:388.59px;font-size:6.6px;color:#a2a2a2;line-height:8px;height:8px;width:6px;text-align:center;">1</div>
<div class="t " style="left:32px;top:395.19px;font-size:6.6px;color:#a2a2a2;line-height:8px;height:8px;width:6px;text-align:center;">4</div>
<div class="t " style="left:32px;top:411.52px;font-size:6.6px;color:#a2a2a2;line-height:8px;height:8px;width:6px;text-align:center;">1</div>
<div class="t " style="left:32px;top:418.12px;font-size:6.6px;color:#a2a2a2;line-height:8px;height:8px;width:6px;text-align:center;">5</div>
<div class="t " style="left:32px;top:434.45px;font-size:6.6px;color:#a2a2a2;line-height:8px;height:8px;width:6px;text-align:center;">1</div>
<div class="t " style="left:32px;top:441.05px;font-size:6.6px;color:#a2a2a2;line-height:8px;height:8px;width:6px;text-align:center;">6</div>
<div class="t " style="left:32px;top:457.38px;font-size:6.6px;color:#a2a2a2;line-height:8px;height:8px;width:6px;text-align:center;">1</div>
<div class="t " style="left:32px;top:463.98px;font-size:6.6px;color:#a2a2a2;line-height:8px;height:8px;width:6px;text-align:center;">7</div>
<div class="a" style="left:41.5px;top:71px;width:435.5px;height:404px;background:#ffffff;"></div>
<svg style="left:0;top:0" width="692" height="504" viewBox="0 0 692 504"><path d="M171 157.5 L285.7 157.5 L400.4 270.8 L400.4 386 L285.3 386 L171 271.5 Z" fill="#00ff00" stroke="#075207" stroke-width="1.45" stroke-linejoin="round"/><path d="M171 157.5 L285.3 270.8 L400.4 270.8 M285.3 270.8 L285.3 386" fill="none" stroke="#075207" stroke-width="1.45"/></svg>
<div class="a" style="left:477px;top:59px;width:10px;height:416px;background:#3f3f3f;"></div>
<svg style="left:479.5px;top:64px" width="5" height="3" viewBox="0 0 5 3"><path d="M0 3 L2.5 0 L5 3 Z" fill="#e0e0e0"/></svg>
<svg style="left:480.3px;top:469.3px" width="5" height="3" viewBox="0 0 5 3"><path d="M0 0 L2.5 3 L5 0 Z" fill="#e0e0e0"/></svg>
<div class="a" style="left:478px;top:187px;width:8.5px;height:135px;background:linear-gradient(90deg,#9c9c9c,#7a7a7a);border-radius:3px;"></div>
<div class="a" style="left:31px;top:475px;width:456px;height:12px;background:#464646;border-top:1px solid #363636;box-sizing:border-box;"></div>
<div class="a" style="left:31px;top:476px;width:32px;height:11px;background:#3d3d3d;"></div>
<div class="a" style="left:64px;top:476px;width:16px;height:11px;background:#4c4c4c;"></div>
<div class="t " style="left:34px;top:476.5px;font-size:7.8px;color:#f0f0f0;font-weight:bold;">118.1%</div>
<div class="a" style="left:63px;top:476px;width:1px;height:11.5px;background:#3a3a3a;"></div>
<svg style="left:66.5px;top:476.5px" width="10" height="10" viewBox="0 0 10 10"><circle cx="5" cy="5" r="4" fill="#c8c8c8"/><path d="M5 2.5 V5 H7" stroke="#555" stroke-width="1" fill="none"/></svg>
<div class="a" style="left:80px;top:476px;width:1px;height:11.5px;background:#3a3a3a;"></div>
<div class="t " style="left:103px;top:476.5px;font-size:7.9px;color:#ececec;">文档:1.37M/1023.5K</div>
<svg style="left:198.5px;top:478px" width="5" height="7" viewBox="0 0 5 7"><path d="M0 0 L5 3.5 L0 7 Z" fill="#e8e8e8"/></svg>
<div class="a" style="left:206px;top:476px;width:1px;height:11.5px;background:#3a3a3a;"></div>
<div class="a" style="left:207px;top:476px;width:270px;height:11px;background:#3d3d3d;"></div>
<svg style="left:209.5px;top:479.5px" width="3" height="5" viewBox="0 0 3 5"><path d="M3 0 L0 2.5 L3 5 Z" fill="#e0e0e0"/></svg>
<svg style="left:471.5px;top:479.5px" width="3" height="5" viewBox="0 0 3 5"><path d="M0 0 L3 2.5 L0 5 Z" fill="#e0e0e0"/></svg>
<div class="a" style="left:300px;top:476.8px;width:75px;height:8.2px;background:linear-gradient(180deg,#9c9c9c,#787878);border-radius:3px;"></div>
<div class="a" style="left:477px;top:475px;width:10px;height:12px;background:#484848;"></div>
<div class="a" style="left:31px;top:487px;width:456px;height:12.7px;background:#353535;"></div>
<div class="a" style="left:31px;top:488px;width:33.5px;height:11.7px;background:#494949;"></div>
<div class="t " style="left:36px;top:489px;font-size:8.2px;color:#d4d4d4;">时间轴</div>
<svg style="left:477px;top:492.5px" width="9" height="6" viewBox="0 0 9 6"><path d="M0 1.2 L3.2 1.2 L1.6 3.2 Z" fill="#cfcfcf"/><path d="M4 0.8 H9 M4 2.5 H9 M4 4.2 H9" stroke="#c4c4c4" stroke-width="0.9"/></svg>
<div class="a" style="left:489.5px;top:45px;width:25.5px;height:8.5px;background:#2e2e2e;"></div>
<svg style="left:508px;top:47px" width="6" height="5" viewBox="0 0 6 5"><path d="M2.5 0 L0 2.5 L2.5 5 Z M5.5 0 L3 2.5 L5.5 5 Z" fill="#d0d0d0"/></svg>
<div class="a" style="left:489.5px;top:54px;width:25.5px;height:445.5px;background:#535353;"></div>
<div class="a" style="left:489.5px;top:81.5px;width:25.5px;height:1px;background:#383838;"></div>
<div class="a" style="left:489.5px;top:108.5px;width:25.5px;height:1px;background:#383838;"></div>
<div class="a" style="left:489.5px;top:155.5px;width:25.5px;height:1px;background:#383838;"></div>
<div class="a" style="left:489.5px;top:183.5px;width:25.5px;height:1px;background:#383838;"></div>
<div class="a" style="left:496px;top:57px;width:12px;height:1.2px;background:#474747;"></div>
<div class="a" style="left:496px;top:86px;width:12px;height:1.2px;background:#474747;"></div>
<div class="a" style="left:496px;top:113px;width:12px;height:1.2px;background:#474747;"></div>
<div class="a" style="left:496px;top:160.5px;width:12px;height:1.2px;background:#474747;"></div>
<div class="a" style="left:496px;top:188.5px;width:12px;height:1.2px;background:#474747;"></div>
<svg style="left:496px;top:63px" width="14" height="14" viewBox="0 0 14 14"><rect x="2" y="1" width="3" height="3" fill="#cfcfcf"/><rect x="2" y="5.2" width="3" height="3" fill="#cfcfcf"/><rect x="2" y="9.5" width="3" height="3" fill="#cfcfcf"/><path d="M7.5 3 C11.5 2.5 12 7 9 10" fill="none" stroke="#cfcfcf" stroke-width="1.8"/><path d="M6.5 3 L9.5 0.8 V5.2 Z" fill="#cfcfcf"/></svg>
<svg style="left:496px;top:91px" width="14" height="14" viewBox="0 0 14 14"><path d="M1 2 H4.5 M1 4.5 H4.5 M1 7 H3.5" stroke="#cfcfcf" stroke-width="1"/><circle cx="8.5" cy="3.5" r="2" fill="#cfcfcf"/><path d="M7.6 4.5 H9.4 V7.5 H13 V10.5 H4 V7.5 H7.6 Z" fill="#cfcfcf"/><rect x="4" y="11.3" width="9" height="1.3" fill="#cfcfcf"/></svg>
<div class="t" style="left:496.5px;top:118.5px;font-size:13px;font-weight:bold;line-height:15px;height:15px;color:#cfcfcf;">A</div>
<div class="a" style="left:507.3px;top:120px;width:1.2px;height:12px;background:#cfcfcf;"></div>
<svg style="left:496px;top:138px" width="14" height="14" viewBox="0 0 14 14"><path d="M8 2 H12 M8 2 V12 M10.5 2 V12" stroke="#cfcfcf" stroke-width="1.2" fill="none"/><path d="M8 2 H6 A3 3 0 0 0 6 8 H8 Z" fill="#cfcfcf"/></svg>
<svg style="left:496px;top:165px" width="14" height="14" viewBox="0 0 14 14"><path d="M3 3 L11.5 11.5 M11 3 L2.5 11.5" stroke="#cfcfcf" stroke-width="1.4"/><path d="M8.3 8.3 L11.8 11.8 M5.7 8.3 L2.2 11.8" stroke="#cfcfcf" stroke-width="2.8" stroke-linecap="round"/><circle cx="3" cy="3" r="1.7" fill="none" stroke="#cfcfcf" stroke-width="1.3"/><path d="M10 4 L12.5 1.5" stroke="#cfcfcf" stroke-width="1.8"/></svg>
<svg style="left:496px;top:194px" width="14" height="14" viewBox="0 0 14 14"><rect x="4" y="7" width="6.5" height="6" fill="#cfcfcf"/><path d="M5.5 7 L3.5 1.5 M7.2 7 V0.5 M9 7 L11 2" stroke="#cfcfcf" stroke-width="1.6"/></svg>
<svg style="left:496px;top:213px" width="14" height="14" viewBox="0 0 14 14"><path d="M1.5 3.5 H10" stroke="#cfcfcf" stroke-width="2"/><path d="M1.5 8.5 H10" stroke="#cfcfcf" stroke-width="1.6"/><circle cx="10.5" cy="9" r="2.6" fill="#cfcfcf"/><path d="M9 2.5 L12.5 3.5 L9 4.5 Z" fill="#cfcfcf"/></svg>
<div class="a" style="left:518px;top:45px;width:170px;height:8.5px;background:#2e2e2e;"></div>
<svg style="left:681px;top:47px" width="6" height="5" viewBox="0 0 6 5"><path d="M0 0 L2.5 2.5 L0 5 Z M3 0 L5.5 2.5 L3 5 Z" fill="#d0d0d0"/></svg>
<div class="a" style="left:518px;top:54px;width:170px;height:11.5px;background:#383838;"></div>
<div class="a" style="left:518px;top:54px;width:26px;height:11.5px;background:#535353;"></div>
<div class="t " style="left:521.5px;top:55px;font-size:8.3px;color:#e6e6e6;">属性</div>
<svg style="left:677px;top:57.5px" width="9" height="6" viewBox="0 0 9 6"><path d="M0 1.2 L3.2 1.2 L1.6 3.2 Z" fill="#cfcfcf"/><path d="M4 0.8 H9 M4 2.5 H9 M4 4.2 H9" stroke="#c4c4c4" stroke-width="0.9"/></svg>
<div class="a" style="left:518px;top:65.5px;width:170px;height:148.5px;background:#535353;"></div>
<div class="t " style="left:524px;top:72px;font-size:8.3px;color:#f0f0f0;">无属性</div>
<div class="a" style="left:518px;top:88px;width:170px;height:1px;background:#616161;"></div>
<div class="a" style="left:677px;top:89px;width:11px;height:112.5px;background:#464646;border-left:1.2px solid #5e5e5e;box-sizing:border-box;"></div>
<div class="a" style="left:518px;top:201.5px;width:170px;height:12.5px;background:#5a5a5a;"></div>
<svg style="left:660.3px;top:203.5px" width="8" height="9" viewBox="0 0 8 9"><path d="M0 1.5 H8 M3 0.5 H5" stroke="#747474" stroke-width="1"/><path d="M1 2.5 H7 L6.5 9 H1.5 Z" fill="#747474"/></svg>
<svg style="left:682px;top:207px" width="5" height="5" viewBox="0 0 5 5"><path d="M5 0 L0 5 M5 2.5 L2.5 5" stroke="#6e6e6e" stroke-width="0.8"/></svg>
<div class="a" style="left:518px;top:216.3px;width:170px;height:11px;background:#383838;"></div>
<div class="a" style="left:518px;top:216.3px;width:18px;height:11px;background:#3f3f3f;"></div>
<div class="t " style="left:523px;top:216.7px;font-size:8.2px;color:#8c8c8c;">3D</div>
<div class="a" style="left:538px;top:216.3px;width:25.7px;height:11.7px;background:#535353;"></div>
<div class="t " style="left:542.5px;top:216.7px;font-size:8.3px;color:#f0f0f0;">图层</div>
<div class="a" style="left:566px;top:216.3px;width:26px;height:11px;background:#3f3f3f;"></div>
<div class="t " style="left:570px;top:216.7px;font-size:8.3px;color:#8c8c8c;">通道</div>
<svg style="left:677px;top:220px" width="9" height="6" viewBox="0 0 9 6"><path d="M0 1.2 L3.2 1.2 L1.6 3.2 Z" fill="#cfcfcf"/><path d="M4 0.8 H9 M4 2.5 H9 M4 4.2 H9" stroke="#c4c4c4" stroke-width="0.9"/></svg>
<div class="a" style="left:518px;top:227.3px;width:170px;height:59.7px;background:#535353;"></div>
<div class="a" style="left:521px;top:230.5px;width:47.5px;height:12.5px;background:#6a6a6a;border:1px solid #3c3c3c;box-sizing:border-box;border-radius:2px;"></div>
<svg style="left:524.5px;top:233px" width="7" height="8" viewBox="0 0 7 8"><circle cx="4" cy="3" r="2.2" fill="none" stroke="#e8e8e8" stroke-width="1"/><path d="M2.5 4.8 L0.5 7.5" stroke="#e8e8e8" stroke-width="1"/></svg>
<div class="t " style="left:535px;top:231.5px;font-size:8.4px;color:#f4f4f4;font-weight:bold;">类型</div>
<svg style="left:561px;top:233px" width="5" height="8" viewBox="0 0 5 8"><path d="M0.5 3 L2.5 0.5 L4.5 3 Z M0.5 5 L2.5 7.5 L4.5 5 Z" fill="#e0e0e0"/></svg>
<svg style="left:582px;top:232.5px" width="10" height="9" viewBox="0 0 10 9"><rect x="0.5" y="0.5" width="9" height="8" fill="none" stroke="#c8c8c8"/><path d="M2 7 L4.5 4 L6 6 L7 5 L8.5 7 Z" fill="#c8c8c8"/></svg>
<svg style="left:599px;top:232.5px" width="9" height="9" viewBox="0 0 9 9"><circle cx="4.5" cy="4.5" r="3.3" fill="#8a8a8a" stroke="#c8c8c8"/><path d="M4.5 0.7 A3.8 3.8 0 0 0 1.8 7.2 Z" fill="#c8c8c8"/></svg>
<div class="t" style="left:616px;top:231px;font-family:'Liberation Serif',serif;font-size:10.5px;line-height:12px;height:12px;color:#c8c8c8;font-weight:bold;">T</div>
<svg style="left:631.5px;top:232px" width="10" height="10" viewBox="0 0 10 10"><rect x="1.5" y="1.5" width="7" height="7" fill="none" stroke="#c8c8c8"/><rect x="0" y="0" width="2.5" height="2.5" fill="#c8c8c8"/><rect x="7.5" y="0" width="2.5" height="2.5" fill="#c8c8c8"/><rect x="0" y="7.5" width="2.5" height="2.5" fill="#c8c8c8"/><rect x="7.5" y="7.5" width="2.5" height="2.5" fill="#c8c8c8"/></svg>
<svg style="left:649.3px;top:232px" width="10" height="10" viewBox="0 0 10 10"><path d="M1 0.5 H6 L8.5 3 V9.5 H1 Z" fill="#c8c8c8"/><rect x="0" y="5" width="5" height="4.5" fill="#535353" stroke="#c8c8c8" stroke-width="0.8"/></svg>
<div class="a" style="left:673px;top:232px;width:6px;height:11.5px;background:linear-gradient(180deg,#8a8a8a,#1e1e1e 45%,#1e1e1e);border:1px solid #2a2a2a;box-sizing:border-box;border-radius:1px;"></div>
<div class="a" style="left:518px;top:246px;width:170px;height:1px;background:#464646;"></div>
<div class="a" style="left:521px;top:249.5px;width:74px;height:12.5px;background:#5e5e5e;border:1px solid #4b4b4b;box-sizing:border-box;border-radius:2px;"></div>
<div class="t " style="left:527px;top:250.5px;font-size:8.3px;color:#d8d8d8;">正常</div>
<svg style="left:588px;top:252px" width="5" height="8" viewBox="0 0 5 8"><path d="M0.5 3 L2.5 0.5 L4.5 3 Z M0.5 5 L2.5 7.5 L4.5 5 Z" fill="#c0c0c0"/></svg>
<div class="t " style="left:602px;top:250.5px;font-size:8.3px;color:#d8d8d8;">不透明度:</div>
<div class="a" style="left:641px;top:249px;width:23.5px;height:13px;background:#5a5a5a;border:1px solid #484848;box-sizing:border-box;"></div>
<div class="t " style="left:644px;top:250.5px;font-size:7.6px;color:#7e7e7e;">100%</div>
<div class="a" style="left:667px;top:249px;width:11.5px;height:13px;background:#626262;border:1px solid #484848;box-sizing:border-box;border-radius:1px;"></div>
<svg style="left:670.5px;top:254.5px" width="5" height="3" viewBox="0 0 5 3"><path d="M0 0 L2.5 3 L5 0 Z" fill="#9a9a9a"/></svg>
<div class="a" style="left:518px;top:264.5px;width:170px;height:1px;background:#464646;"></div>
<div class="t " style="left:521px;top:269.5px;font-size:8.3px;color:#d8d8d8;">锁定:</div>
<svg style="left:545.5px;top:270px" width="9" height="9" viewBox="0 0 9 9"><rect x="0.5" y="0.5" width="8" height="8" fill="none" stroke="#9c9c9c"/><rect x="1" y="1" width="2.3" height="2.3" fill="#9c9c9c"/><rect x="5.6" y="1" width="2.3" height="2.3" fill="#9c9c9c"/><rect x="3.3" y="3.3" width="2.3" height="2.3" fill="#9c9c9c"/><rect x="1" y="5.6" width="2.3" height="2.3" fill="#9c9c9c"/><rect x="5.6" y="5.6" width="2.3" height="2.3" fill="#9c9c9c"/></svg>
<svg style="left:561px;top:269.5px" width="11" height="10" viewBox="0 0 11 10"><path d="M10 0.5 L5 5.5 L6.2 6.7 L10.7 1.2 Z" fill="#9c9c9c"/><path d="M4.6 6 L5.8 7.2 C5 9.5 2.5 9.5 0.5 9.5 C2.2 8.7 2.6 6.8 4.6 6 Z" fill="#9c9c9c"/></svg>
<svg style="left:576px;top:269.5px" width="10" height="10" viewBox="0 0 10 10"><path d="M5 1 V9 M1 5 H9" stroke="#9c9c9c" stroke-width="1"/><path d="M5 0 L6.5 2 H3.5 Z M5 10 L6.5 8 H3.5 Z M0 5 L2 3.5 V6.5 Z M10 5 L8 3.5 V6.5 Z" fill="#9c9c9c"/></svg>
<svg style="left:590.5px;top:269.5px" width="9" height="10" viewBox="0 0 9 10"><rect x="1" y="4" width="7" height="5.5" fill="#9c9c9c"/><path d="M2.5 4 V2.5 A2 2 0 0 1 6.5 2.5 V4" fill="none" stroke="#9c9c9c" stroke-width="1.2"/></svg>
<div class="t " style="left:617px;top:269.5px;font-size:8.3px;color:#d8d8d8;">填充:</div>
<div class="a" style="left:641px;top:268.7px;width:23.5px;height:12.8px;background:#5a5a5a;border:1px solid #484848;box-sizing:border-box;"></div>
<div class="t " style="left:644px;top:270px;font-size:7.6px;color:#7e7e7e;">100%</div>
<div class="a" style="left:667px;top:268.7px;width:11.5px;height:12.8px;background:#626262;border:1px solid #484848;box-sizing:border-box;border-radius:1px;"></div>
<svg style="left:670.5px;top:274px" width="5" height="3" viewBox="0 0 5 3"><path d="M0 0 L2.5 3 L5 0 Z" fill="#9a9a9a"/></svg>
<div class="a" style="left:518px;top:286px;width:170px;height:1px;background:#3e3e3e;"></div>
<div class="a" style="left:518px;top:287px;width:170px;height:200.5px;background:#444444;"></div>
<div class="a" style="left:678.5px;top:286.5px;width:9.5px;height:201px;background:#4e4e4e;"></div>
<div class="a" style="left:518px;top:286.5px;width:160.5px;height:21px;background:#535353;"></div>
<div class="a" style="left:518px;top:307.5px;width:160.5px;height:0.8px;background:#404040;"></div>
<div class="a" style="left:518px;top:308.3px;width:160.5px;height:20.7px;background:#535353;"></div>
<div class="a" style="left:518px;top:329px;width:160.5px;height:0.8px;background:#404040;"></div>
<div class="a" style="left:537px;top:286.5px;width:0.8px;height:42.5px;background:#494949;"></div>
<svg style="left:522.5px;top:293.85px" width="9" height="6.3" viewBox="0 0 10 7"><path d="M0.5 3.5 Q5 -1 9.5 3.5 Q5 8 0.5 3.5 Z" fill="none" stroke="#b4b4b4" stroke-width="1"/><circle cx="5" cy="3.5" r="1.6" fill="#b4b4b4"/></svg>
<svg style="left:522.5px;top:315.65px" width="9" height="6.3" viewBox="0 0 10 7"><path d="M0.5 3.5 Q5 -1 9.5 3.5 Q5 8 0.5 3.5 Z" fill="none" stroke="#b4b4b4" stroke-width="1"/><circle cx="5" cy="3.5" r="1.6" fill="#b4b4b4"/></svg>
<svg style="left:540.5px;top:287.7px" width="22.3" height="17.8" viewBox="0 0 22 17"><defs><pattern id="ck" width="4" height="4" patternUnits="userSpaceOnUse"><rect width="4" height="4" fill="#fff"/><rect width="2" height="2" fill="#ccc"/><rect x="2" y="2" width="2" height="2" fill="#ccc"/></pattern></defs><rect x="0.5" y="0.5" width="21" height="16" fill="url(#ck)" stroke="#222"/><path d="M6.5 3.8 Q7 2.8 9.5 3 Q12.5 3.6 14 7 Q15 10.5 13.5 11.8 Q11.5 12.5 9.5 10.5 Q6.5 7.5 6.5 3.8 Z" fill="#19d82e"/></svg>
<div class="a" style="left:540.5px;top:309.8px;width:22.3px;height:17.6px;background:#ffffff;border:1px solid #222;box-sizing:border-box;"></div>
<div class="t " style="left:569px;top:292.5px;font-size:8.3px;color:#f0f0f0;">矩形 2</div>
<div class="t " style="left:571.3px;top:314px;font-size:7.6px;color:#f0f0f0;font-style:italic;font-weight:bold;">背景</div>
<svg style="left:659.3px;top:314.3px" width="8" height="10" viewBox="0 0 8 10"><rect x="0.8" y="3.8" width="6.4" height="5" fill="none" stroke="#cfcfcf" stroke-width="1.1"/><path d="M2.3 3.8 V2.5 A1.7 1.7 0 0 1 5.7 2.5 V3.8" fill="none" stroke="#cfcfcf" stroke-width="1.1"/></svg>
<div class="a" style="left:518px;top:487.5px;width:170px;height:12px;background:#535353;"></div>
<svg style="left:548.5px;top:490.5px" width="11" height="7" viewBox="0 0 11 7"><rect x="0.5" y="1.5" width="5" height="4" rx="2" fill="none" stroke="#767676" stroke-width="1.1"/><rect x="5.5" y="1.5" width="5" height="4" rx="2" fill="none" stroke="#767676" stroke-width="1.1"/><path d="M3.5 3.5 H7.5" stroke="#767676" stroke-width="1.1"/></svg>
<div class="t" style="left:567.5px;top:488px;font-family:'Liberation Serif',serif;font-style:italic;font-size:9.5px;line-height:11px;height:11px;color:#767676;">fx</div>
<svg style="left:586.5px;top:490px" width="10" height="8" viewBox="0 0 10 8"><rect x="0" y="0" width="10" height="8" fill="#bcbcbc"/><circle cx="5" cy="4" r="2.3" fill="#535353"/></svg>
<svg style="left:604px;top:489px" width="11" height="10" viewBox="0 0 11 10"><circle cx="4.5" cy="4.5" r="3.8" fill="#535353" stroke="#bcbcbc" stroke-width="1"/><path d="M4.5 0.7 A3.8 3.8 0 0 0 1.8 7.2 Z" fill="#bcbcbc"/><path d="M8 8.5 H11 L9.5 10 Z" fill="#bcbcbc"/></svg>
<svg style="left:623.5px;top:490px" width="10" height="8" viewBox="0 0 10 8"><path d="M0 1 H4 L5 2.2 H10 V8 H0 Z" fill="#bcbcbc"/></svg>
<svg style="left:641.5px;top:489px" width="10" height="10" viewBox="0 0 10 10"><path d="M2.5 0.5 H9.5 V7 H2.5 Z" fill="#bcbcbc"/><path d="M0.5 2.5 H6.5 V9 H0.5 Z" fill="#535353" stroke="#bcbcbc" stroke-width="1"/></svg>
<svg style="left:661.5px;top:489.5px" width="8" height="9" viewBox="0 0 8 9"><path d="M0 1.5 H8 M3 0.5 H5" stroke="#767676" stroke-width="1"/><path d="M1 2.5 H7 L6.5 9 H1.5 Z" fill="#767676"/></svg>
<div class="a" style="left:494px;top:394.5px;width:173.5px;height:84.5px;background:#ffffff;"></div>
<div class="t" style="left:514.2px;top:411.8px;width:130px;font-size:31.5px;line-height:36px;height:36px;font-weight:bold;color:#1dbf3c;letter-spacing:0.5px;">百科全说</div>
<div class="t" style="left:524px;top:449px;width:111px;font-size:18px;line-height:24px;height:24px;color:#8a8a8a;letter-spacing:0.3px;">助你轻松解决</div>
<div class="a" style="left:688px;top:0px;width:4px;height:504px;background:#363636;"></div>
<div class="a" style="left:690.2px;top:14px;width:0.8px;height:486px;background:#484848;"></div>
<div class="a" style="left:0px;top:499.7px;width:692px;height:4.3px;background:#343434;"></div>
<div class="a" style="left:0px;top:501.5px;width:692px;height:0.8px;background:#444;"></div>
</div></body></html>
